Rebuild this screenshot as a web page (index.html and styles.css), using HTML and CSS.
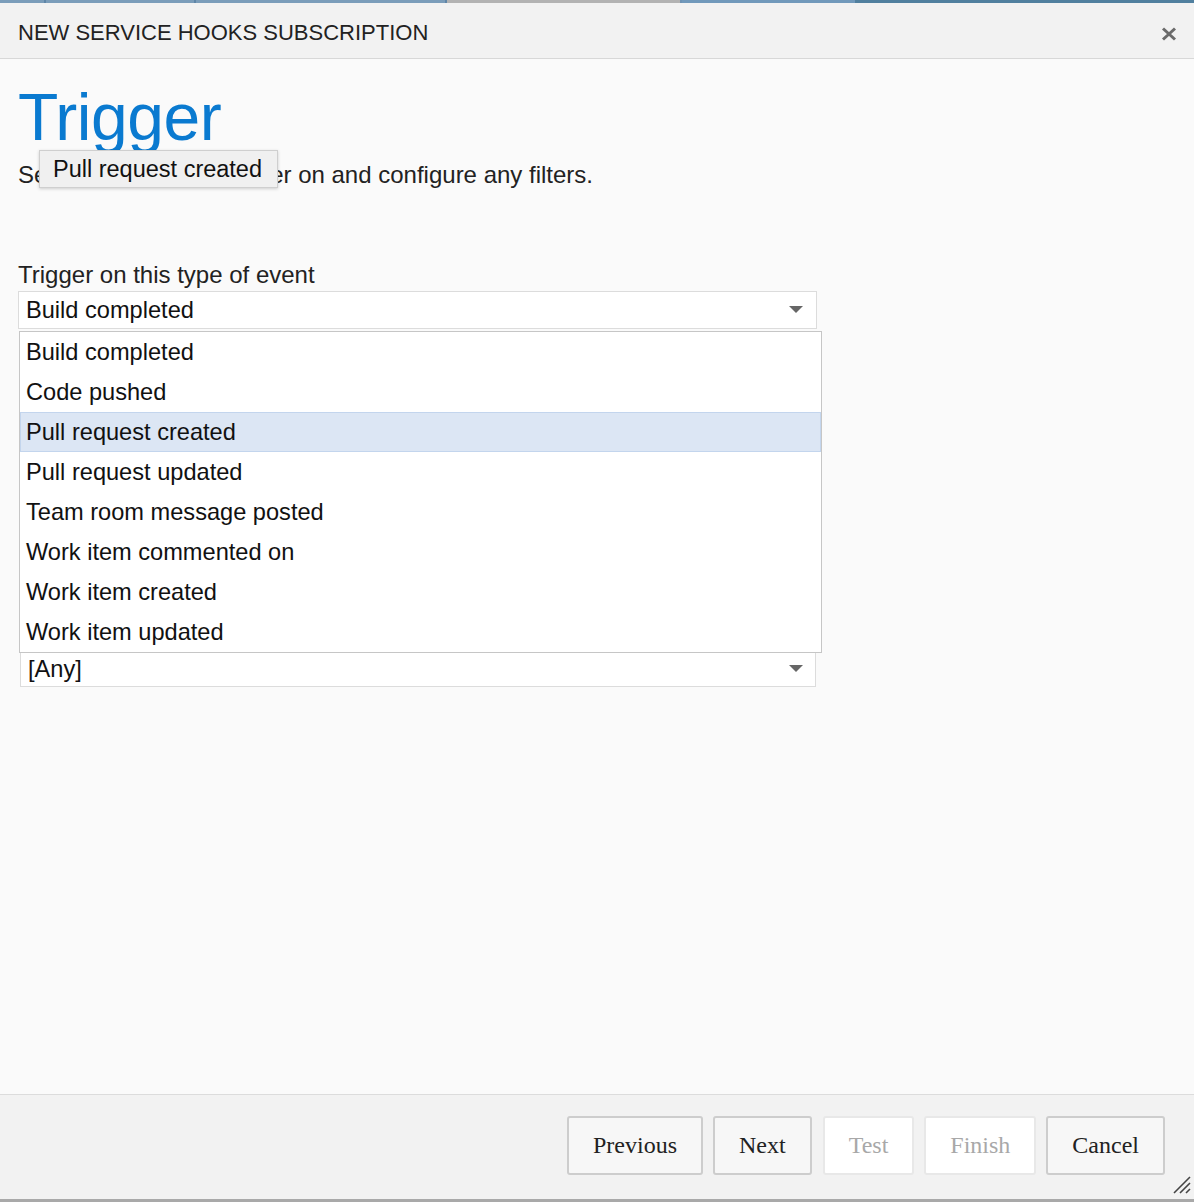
FILE: index.html
```html
<!DOCTYPE html>
<html lang="en">
<head>
<meta charset="utf-8">
<title>New service hooks subscription</title>
<link rel="stylesheet" href="styles.css">
</head>
<body>
<div class="dialog">
  <div class="topbar">
    <span class="seg seg-a"></span>
    <span class="seg seg-b"></span>
    <span class="seg seg-c"></span>
    <span class="seg seg-gray"></span>
    <span class="seg seg-d"></span>
    <span class="seg seg-e"></span>
  </div>
  <header class="dlg-header">
    <h1 class="dlg-title">NEW SERVICE HOOKS SUBSCRIPTION</h1>
    <button class="close" aria-label="Close">
      <svg width="16" height="14" viewBox="0 0 16 14"><path d="M2 1.5 L14 12.5 M14 1.5 L2 12.5" stroke="#6b6b6b" stroke-width="3" stroke-linecap="butt"/></svg>
    </button>
  </header>
  <main class="content">
    <h2 class="page-title">Trigger</h2>
    <p class="intro">Select the event to trigger on and configure any filters.</p>
    <div class="tooltip">Pull request created</div>
    <div class="field">
      <label class="field-label">Trigger on this type of event</label>
      <div class="select"><span class="select-text">Build completed</span><span class="arrow"></span></div>
      <ul class="menu">
        <li class="menu-item">Build completed</li>
        <li class="menu-item">Code pushed</li>
        <li class="menu-item menu-item-hover">Pull request created</li>
        <li class="menu-item">Pull request updated</li>
        <li class="menu-item">Team room message posted</li>
        <li class="menu-item">Work item commented on</li>
        <li class="menu-item">Work item created</li>
        <li class="menu-item">Work item updated</li>
      </ul>
    </div>
    <div class="field field-filter">
      <div class="select select-any"><span class="select-text">[Any]</span><span class="arrow"></span></div>
    </div>
  </main>
  <footer class="dlg-footer">
    <button class="btn">Previous</button>
    <button class="btn">Next</button>
    <button class="btn btn-disabled btn-gap">Test</button>
    <button class="btn btn-disabled">Finish</button>
    <button class="btn">Cancel</button>
    <svg class="grip" width="24" height="24" viewBox="0 0 24 24"><path d="M22 6 L6 22 M22 12 L12 22 M22 18 L18 22" stroke="#444" stroke-width="1.6"/></svg>
  </footer>
</div>
</body>
</html>
```
FILE: styles.css
```css
* { box-sizing: border-box; }
html, body { margin: 0; padding: 0; }
body {
  background: #fafafa;
  font-family: "Liberation Sans", Arial, sans-serif;
  color: #1f1f1f;
}
.dialog {
  width: 1194px;
  height: 1202px;
  display: flex;
  flex-direction: column;
  overflow: hidden;
}
.topbar {
  height: 3px;
  display: flex;
  flex: none;
}
.seg { height: 3px; display: block; }
.seg-a { width: 46px; background: #7b9dba; border-right: 2px solid #5f86a8; }
.seg-b { width: 150px; background: #7b9dba; border-right: 2px solid #5f86a8; }
.seg-c { width: 251px; background: #7b9dba; border-right: 2px solid #5f86a8; }
.seg-gray { width: 235px; background: #b3b3b3; border-right: 2px solid #6f93b4; }
.seg-d { width: 173px; background: #7199bb; }
.seg-e { flex: 1; background: #51809f; }

.dlg-header {
  flex: none;
  height: 56px;
  background: #f2f2f2;
  border-bottom: 1px solid #d8d8d8;
  display: flex;
  align-items: flex-start;
  justify-content: space-between;
  padding: 5px 17px 0 18px;
}
.dlg-title {
  margin: 0;
  font-size: 22px;
  font-weight: normal;
  line-height: 50px;
  color: #222;
}
.close {
  border: 0;
  background: transparent;
  padding: 0;
  margin-top: 19px;
  width: 16px;
  height: 14px;
  display: block;
}
.close svg { display: block; }

.content {
  flex: 1;
  position: relative;
  padding: 0 18px;
  background: #fafafa;
}
.page-title {
  margin: 25px 0 0;
  font-size: 66px;
  line-height: 66px;
  font-weight: normal;
  color: #0a7ad0;
  letter-spacing: -0.5px;
}
.intro {
  margin: 10px 0 0;
  font-size: 24px;
  line-height: 30px;
  color: #222;
}
.tooltip {
  position: absolute;
  left: 39px;
  top: 91px;
  width: 239px;
  height: 38px;
  padding: 0 13px;
  background: #f0f0f0;
  border: 1px solid #cfcfcf;
  box-shadow: 0 1px 3px rgba(0,0,0,0.18);
  font-size: 23.5px;
  line-height: 37px;
  color: #111;
  white-space: nowrap;
}
.field { position: relative; }
.field-label {
  display: block;
  margin-top: 70px;
  font-size: 24px;
  line-height: 30px;
  color: #222;
}
.select {
  margin-top: 1px;
  width: 799px;
  height: 38px;
  background: #fff;
  border: 1px solid #dcdcdc;
  display: flex;
  align-items: center;
  justify-content: space-between;
  padding: 0 13px 0 7px;
}
.select-text {
  font-size: 23.6px;
  line-height: 36px;
  color: #111;
}
.arrow {
  width: 0;
  height: 0;
  border-left: 7px solid transparent;
  border-right: 7px solid transparent;
  border-top: 7px solid #666;
  margin-top: -2px;
}
.menu {
  position: absolute;
  left: 1px;
  top: 71px;
  margin: 0;
  padding: 0;
  list-style: none;
  width: 803px;
  background: #fff;
  border: 1px solid #c6c6c6;
  z-index: 2;
}
.menu-item {
  height: 40px;
  padding: 0 6px;
  font-size: 23.6px;
  line-height: 40px;
  color: #111;
  white-space: nowrap;
}
.menu-item-hover {
  background: #dce6f4;
  border: 1px solid #c3d5ed;
  padding: 0 5px;
  line-height: 38px;
}
.field-filter { margin-top: 322px; margin-left: 2px; }
.select-any {
  margin-top: 0;
  width: 796px;
  height: 36px;
  padding: 0 12px 0 7px;
}
.select-any .select-text { line-height: 34px; }

.dlg-footer {
  flex: none;
  position: relative;
  height: 108px;
  background: #f2f2f2;
  border-top: 1px solid #dcdcdc;
  border-bottom: 3px solid #a9a9a9;
  display: flex;
  justify-content: flex-end;
  align-items: flex-start;
  padding: 21px 29px 0 0;
}
.btn {
  height: 59px;
  padding: 0 24px;
  margin-left: 10px;
  background: #f7f7f7;
  border: 2px solid #cdcdcd;
  border-radius: 3px;
  font-family: "Liberation Serif", "Times New Roman", serif;
  font-size: 24px;
  color: #222;
}
.btn-disabled {
  background: #fff;
  border-color: #e8e8e8;
  color: #a8a8a8;
}
.btn-gap { margin-left: 11px; }
.grip {
  position: absolute;
  right: 2px;
  bottom: 4px;
}
```
